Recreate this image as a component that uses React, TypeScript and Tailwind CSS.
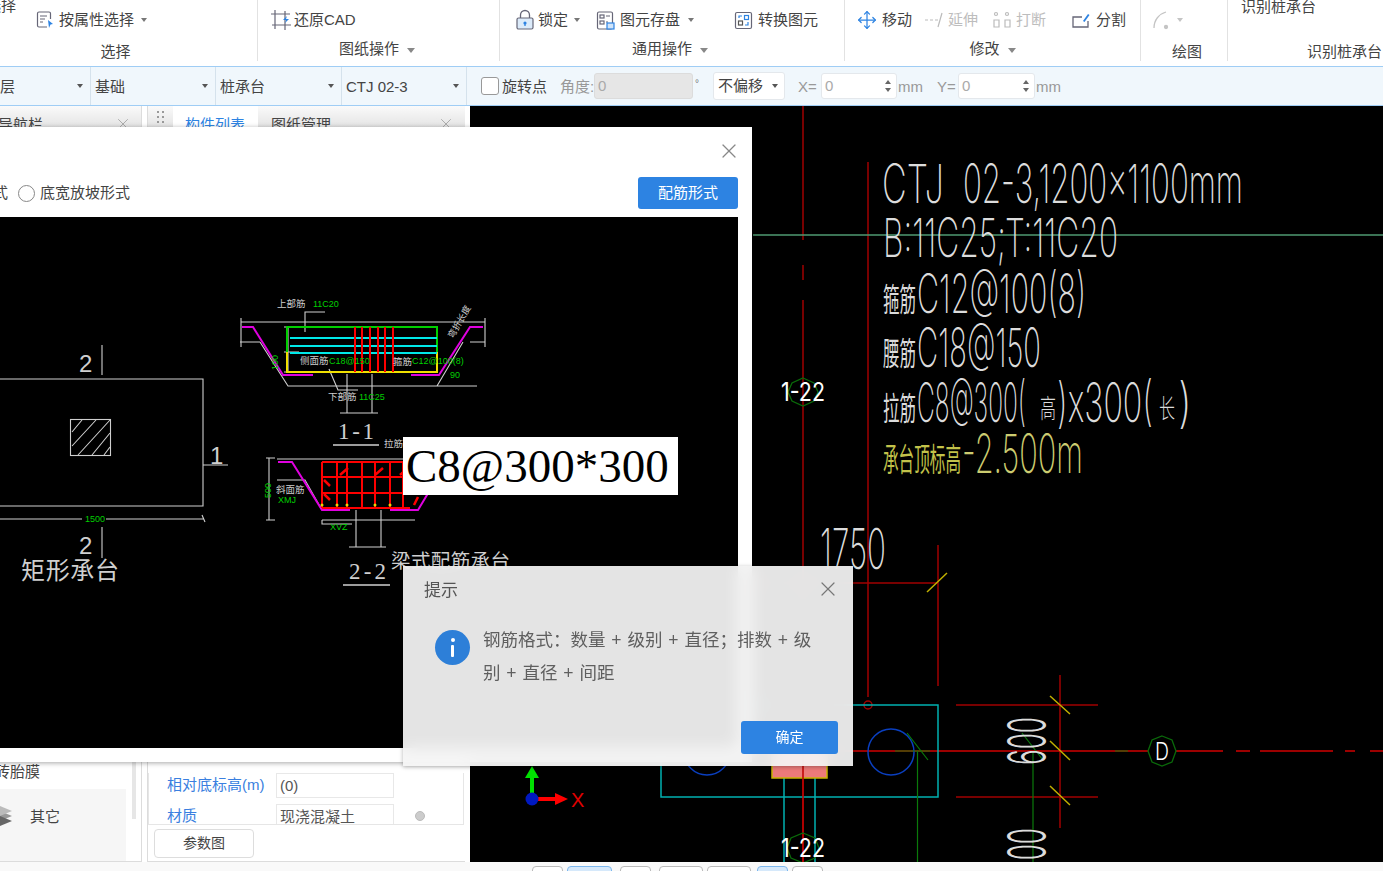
import React from "react";
import { Move, X } from "lucide-react";

const Caret = ({ c = "border-t-[#777]" }: { c?: string }) => (
  <span className={`inline-block w-0 h-0 border-x-[3px] border-x-transparent border-t-[4px] ${c}`} />
);

const DocIcon = () => (
  <svg width="20" height="20" viewBox="0 0 20 20" fill="none" stroke="#667" strokeWidth="1.2">
    <path d="M12 17H4a1.5 1.5 0 0 1-1.5-1.5v-12A1.5 1.5 0 0 1 4 2h10a1.5 1.5 0 0 1 1.500 1.500V9" />
    <path d="M5 6h7M5 9h5M5 12h3" />
    <path d="M13 10l5 4-2.500 .5L14 18z" fill="#2d83e2" stroke="none" />
  </svg>
);
const CadCropIcon = () => (
  <svg width="22" height="22" viewBox="0 0 22 22" fill="none" stroke="#667" strokeWidth="1.200">
    <path d="M5 1V20M1 5H20M15 2V21M2 16H21" />
    <path d="M13 11l4-4-1 3h3l-4 4 1-3z" fill="#2d83e2" stroke="none" />
  </svg>
);
const LockIcon = () => (
  <svg width="20" height="22" viewBox="0 0 20 22" fill="none">
    <path d="M5.500 9V6a4.500 4.500 0 0 1 9 0v3" stroke="#667" strokeWidth="1.300" />
    <rect x="2" y="9" width="16" height="11" rx="1.500" fill="#dcebfa" stroke="#667" strokeWidth="1.200" />
    <circle cx="10" cy="14" r="1.600" fill="#2d83e2" />
    <path d="M10 14v3" stroke="#2d83e2" strokeWidth="1.300" />
  </svg>
);
const SaveIcon = () => (
  <svg width="19" height="19" viewBox="0 0 19 19" fill="none" stroke="#667" strokeWidth="1.2">
    <rect x="1.500" y="1" width="15" height="17" rx="1.500" />
    <rect x="4" y="4" width="4" height="3" />
    <path d="M10 5h4M10 11h2" />
    <rect x="4" y="10" width="4" height="3" />
    <rect x="11" y="12" width="7" height="6" fill="#cfe4fa" stroke="#2d83e2" />
  </svg>
);
const ConvertIcon = () => (
  <svg width="19" height="19" viewBox="0 0 19 19" fill="none" stroke="#667" strokeWidth="1.2">
    <rect x="1.500" y="1.500" width="16" height="16" rx="1.500" />
    <rect x="4.500" y="10" width="4" height="4" stroke="#555" />
    <rect x="10.500" y="4.500" width="4" height="4" stroke="#2d83e2" />
    <path d="M5 7V5h3M14 11v3h-3" stroke="#2d83e2" />
  </svg>
);
const ExtendIcon = () => (
  <svg width="20" height="16" viewBox="0 0 20 16" fill="none" stroke="#bbb" strokeWidth="1.200">
    <path d="M1 8h3M6 8h3M11 8h3" />
    <path d="M18 1l-4 14" />
  </svg>
);
const BreakIcon = () => (
  <svg width="20" height="18" viewBox="0 0 20 18" fill="none" stroke="#bbb" strokeWidth="1.200">
    <circle cx="4" cy="3" r="1.500" />
    <circle cx="15" cy="3" r="1.500" />
    <path d="M2 16V9h5v7zM13 16V9h5v7z" />
  </svg>
);
const SplitIcon = () => (
  <svg width="20" height="18" viewBox="0 0 20 18" fill="none" stroke="#667" strokeWidth="1.300">
    <path d="M17 10v6H2V6h9" />
    <path d="M12 10l5-7 1.500 1-5 7z" fill="#2d83e2" stroke="none" />
  </svg>
);
const ArcIcon = () => (
  <svg width="22" height="22" viewBox="0 0 22 22" fill="none" stroke="#c4c4c4" strokeWidth="1.300">
    <path d="M3 19C3 11 8 5 15 3" />
    <circle cx="15" cy="18" r="1.500" fill="#c4c4c4" />
  </svg>
);

const Item = ({ icon, label, caret, muted, className = "" }: { icon: React.ReactNode; label: string; caret?: boolean; muted?: boolean; className?: string }) => (
  <div className={`flex items-center shrink-0 gap-[2px] ${className}`}>
    {icon}
    <span className={`text-[15px] leading-[22px] ${muted ? "text-[#bdbdbd]" : "text-[#444]"}`}>{label}</span>
    {caret && <span className="ml-[3px] flex items-center"><Caret /></span>}
  </div>
);

const GroupLabel = ({ children, caret, low, className = "" }: { children: string; caret?: boolean; low?: boolean; className?: string }) => (
  <div className={`flex justify-center items-center gap-[8px] text-[15px] leading-[20px] text-[#444] ${low ? "mt-[11px]" : "mt-[8px]"} ${className}`}>
    {children}
    {caret && <span className="w-0 h-0 border-x-[4px] border-x-transparent border-t-[5px] border-t-[#888] mt-[2px]" />}
  </div>
);

const Toolbar = () => (
  <div className="h-[66px] flex bg-white shrink-0 overflow-hidden">
    <div className="w-[258px] h-[61px] border-r border-[#e2e2e2] shrink-0">
      <div className="text-[15px] leading-[20px] text-[#444] h-[9px] -mt-[4px] ml-[-14px] w-[40px]">选择</div>
      <div className="flex pl-[35px] mt-[4px]">
        <Item icon={<DocIcon />} label="按属性选择" caret className="gap-[4px]" />
      </div>
      <div className="pr-[26px]"><GroupLabel low>选择</GroupLabel></div>
    </div>
    <div className="w-[242px] h-[61px] border-r border-[#e2e2e2] shrink-0 pt-[9px]">
      <div className="pl-[12px] flex">
        <Item icon={<CadCropIcon />} label="还原CAD" />
      </div>
      <GroupLabel caret className="pr-[3px]">图纸操作</GroupLabel>
    </div>
    <div className="w-[345px] h-[61px] border-r border-[#e2e2e2] shrink-0 pt-[9px]">
      <div className="flex pl-[15px]">
        <Item icon={<LockIcon />} label="锁定" caret className="w-[81px] gap-[3px]" />
        <Item icon={<SaveIcon />} label="图元存盘" caret className="w-[138px] gap-[5px]" />
        <Item icon={<ConvertIcon />} label="转换图元" className="gap-[5px]" />
      </div>
      <GroupLabel caret className="pr-[4px]">通用操作</GroupLabel>
    </div>
    <div className="w-[296px] h-[61px] border-r border-[#e2e2e2] shrink-0 pt-[9px]">
      <div className="flex pl-[12px]">
        <Item icon={<Move size={20} strokeWidth={1.500} className="text-[#2d83e2] mr-[3px]" />} label="移动" className="w-[67px]" />
        <Item icon={<ExtendIcon />} label="延伸" muted className="w-[68px] gap-[4px]" />
        <Item icon={<BreakIcon />} label="打断" muted className="w-[79px] gap-[4px]" />
        <Item icon={<SplitIcon />} label="分割" className="gap-[5px]" />
      </div>
      <GroupLabel caret>修改</GroupLabel>
    </div>
    <div className="w-[87px] h-[61px] border-r border-[#e2e2e2] shrink-0 pt-[9px]">
      <div className="flex items-center pl-[10px] gap-[4px]"><ArcIcon /><Caret c="border-t-[#c4c4c4]" /></div>
      <GroupLabel low className="pl-[6px]">绘图</GroupLabel>
    </div>
    <div className="flex-1 h-[61px] min-w-0">
      <div className="text-[15px] leading-[20px] text-[#444] -mt-[3px] pl-[13px] whitespace-nowrap">识别桩承台</div>
      <div className="text-[15px] leading-[20px] text-[#444] mt-[25px] pl-[79px] whitespace-nowrap">识别桩承台</div>
    </div>
  </div>
);

const OptCell = ({ label, w }: { label: string; w: string }) => (
  <div className={`${w} h-full shrink-0 border-r border-[#d5e2ec] flex items-center justify-between pl-[4px] pr-[7px] text-[15px] text-[#444]`}>
    <span className="pt-[2px]">{label}</span>
    <Caret c="border-t-[#555]" />
  </div>
);

const Spin = ({ w }: { w: string }) => (
  <div className={`${w} h-[26px] bg-white rounded-[3px] border border-[#e4e8ec] flex items-center justify-between pl-[3px] pr-[5px] text-[15px] text-[#aaa]`}>
    <span>0</span>
    <span className="flex flex-col gap-[4px]">
      <span className="w-0 h-0 border-x-[3px] border-x-transparent border-b-[4px] border-b-[#666]" />
      <span className="w-0 h-0 border-x-[3px] border-x-transparent border-t-[4px] border-t-[#666]" />
    </span>
  </div>
);

const OptionsBar = () => (
  <div className="h-[40px] shrink-0 bg-[#f0f7fc] border-y border-[#9fcdf5] flex items-center">
    <div className="w-[91px] h-full shrink-0 border-r border-[#d5e2ec] flex items-center justify-between pr-[7px] text-[15px] text-[#444]"><span className="pt-[2px]">层</span><Caret c="border-t-[#555]" /></div>
    <OptCell label="基础" w="w-[125px]" />
    <OptCell label="桩承台" w="w-[126px]" />
    <OptCell label="CTJ 02-3" w="w-[125px]" />
    <div className="w-[18px] h-[18px] ml-[14px] rounded-[3px] border border-[#999] bg-white shrink-0" />
    <span className="ml-[3px] pt-[2px] text-[15px] text-[#444] shrink-0">旋转点</span>
    <span className="ml-[13px] pt-[2px] text-[15px] text-[#999] shrink-0 w-[34px] whitespace-nowrap">角度:</span>
    <div className="w-[99px] h-[26px] rounded-[3px] bg-[#e6e6e6] border border-[#dcdcdc] text-[15px] text-[#aaa] pl-[3px] shrink-0 leading-[24px]">0</div>
    <span className="w-[20px] text-[10px] text-[#777] pl-[2px] -mt-[6px] shrink-0">°</span>
    <div className="w-[72px] h-[28px] rounded-[3px] bg-white border border-[#e4e8ec] flex items-center justify-between pl-[4px] pr-[6px] text-[15px] text-[#444] shrink-0"><span>不偏移</span><Caret c="border-t-[#555]" /></div>
    <span className="ml-[13px] pt-[2px] w-[23px] text-[15px] text-[#999] shrink-0">X=</span>
    <Spin w="w-[76px] shrink-0" />
    <span className="w-[40px] pt-[2px] text-[15px] text-[#999] pl-[1px] shrink-0">mm</span>
    <span className="w-[21px] pt-[2px] text-[15px] text-[#999] shrink-0">Y=</span>
    <Spin w="w-[77px] shrink-0" />
    <span className="pt-[2px] text-[15px] text-[#999] pl-[1px] shrink-0">mm</span>
  </div>
);

const LeftPanels = () => (
  <div className="w-[470px] shrink-0 flex bg-white">
    <div className="w-[142px] shrink-0 border-r border-b border-[#dcdcdc] flex flex-col">
      <div className="h-[21px] bg-[linear-gradient(#fafafa,#e4e4e4)] flex justify-between items-start pr-[9px] pt-[9px] text-[15px] leading-[20px] text-[#444] overflow-hidden">
        <span className="ml-[-2px] whitespace-nowrap">导航栏</span>
        <X size={18} strokeWidth={1.300} className="text-[#aaa] shrink-0" />
      </div>
      <div className="flex-1" />
      <div className="text-[15px] leading-[20px] text-[#444] ml-[-5px] whitespace-nowrap mb-[7px]">砖胎膜</div>
      <div className="flex">
        <div className="w-[126px] h-[72px] bg-[#f6f6f6] flex items-start pt-[16px] gap-[14px] overflow-hidden">
          <svg width="16" height="26" viewBox="0 0 16 26" className="shrink-0">
            <path d="M0 6l12 5-12 5z" fill="#999" />
            <path d="M0 11l12 5-12 5z" fill="#666" />
            <path d="M0 1l12 5-12 5z" fill="#bbb" />
          </svg>
          <span className="text-[15px] leading-[20px] text-[#444] mt-[2px]">其它</span>
        </div>
        <div className="w-[4px] h-[60px] bg-[#e6e6e6] ml-[6px] -mt-[30px]" />
      </div>
    </div>
    <div className="w-[5px] shrink-0" />
    <div className="w-[318px] shrink-0 border-l border-b border-[#dcdcdc] flex flex-col">
      <div className="h-[21px] bg-[linear-gradient(#fafafa,#e4e4e4)] flex items-start text-[15px] leading-[20px] overflow-hidden">
        <span className="w-[25px] flex justify-center pt-[5px]">
          <svg width="7" height="12" viewBox="0 0 7 12" fill="#999"><path d="M0 0h2v2H0zM5 0h2v2H5zM0 5h2v2H0zM5 5h2v2H5zM0 10h2v2H0zM5 10h2v2H5z" /></svg>
        </span>
        <span className="w-[85px] h-full bg-white text-[#2d83e2] pt-[9px] pl-[12px]">构件列表</span>
        <span className="pt-[9px] pl-[13px] text-[#444]">图纸管理</span>
        <X size={18} strokeWidth={1.300} className="text-[#aaa] mt-[9px] ml-auto mr-[10px] shrink-0" />
      </div>
      <div className="flex-1" />
      <div className="mr-[1px] border-x border-b border-[#e6e6e6] flex flex-col gap-[6px] pl-[18px]">
        <div className="flex items-center h-[25px]">
          <span className="w-[108px] text-[15px] text-[#3a7fe0] whitespace-nowrap">相对底标高(m)</span>
          <span className="ml-[1px] w-[118px] h-[25px] border border-[#e8e8e8] text-[15px] text-[#555] pl-[3px] leading-[23px]">(0)</span>
        </div>
        <div className="flex items-center h-[20px] overflow-hidden">
          <span className="w-[108px] text-[15px] leading-[20px] text-[#3a7fe0] pt-[4px]">材质</span>
          <span className="ml-[1px] w-[118px] h-[20px] border-x border-t border-[#e8e8e8] text-[15px] text-[#555] pl-[3px] leading-[23px]">现浇混凝土</span>
          <span className="ml-[21px] w-[10px] h-[10px] rounded-full bg-[#ccc] border border-[#bbb] mt-[4px]" />
        </div>
      </div>
      <div className="h-[36px] pl-[6px] pt-[4px]">
        <div className="w-[100px] h-[29px] rounded-[4px] border border-[#ddd] bg-white text-[14px] text-[#444] text-center leading-[27px]">参数图</div>
      </div>
    </div>
  </div>
);

const CadCanvas = () => (
  <div className="flex-1 bg-black min-w-0">
    <svg viewBox="470 106 913 756" width="913" height="756" className="block" fill="none">
      <g stroke="#a00000" strokeWidth="1.500">
        <path d="M803 106V240M803 265V280M803 300V862" />
        <path d="M868 162V697M938 545V686M753 583H938" />
        <path d="M956 705H1098M956 797H1098M1060 675V828" />
        <path d="M753 751H1223" stroke="#d00000" />
        <path d="M1236 751H1250M1260 751H1333M1345 751H1355M1370 751H1383" stroke="#d00000" />
      </g>
      <circle cx="868" cy="705" r="4" stroke="#a00000" strokeWidth="1.500" />
      <path d="M753 235H1383" stroke="#4f9a72" strokeWidth="1.500" />
      <g stroke="#00b0b0" strokeWidth="1.500">
        <path d="M661 705H938V797H661V705" />
        <path d="M784 778V862M815 778V862" />
      </g>
      <rect x="772" y="745" width="55" height="33" fill="#ec7a7a" stroke="#c8b400" strokeWidth="1.500" />
      <path d="M803 745V862" stroke="#c00000" strokeWidth="1.500" />
      <circle cx="891" cy="752" r="23" stroke="#0a3fc0" strokeWidth="1.500" />
      <circle cx="707" cy="752" r="23" stroke="#0a3fc0" strokeWidth="1.500" />
      <g stroke="#0a7a0a" strokeWidth="1.200">
        <path d="M917.500 751V862M1033 751V862" />
        <path d="M907 733L928 760M1022 733L1043 760" />
        <path d="M895 751H930M1115 751H1128" />
      </g>
      <g stroke="#c0b000" strokeWidth="1.500">
        <path d="M927 592L947 573M1050 696L1070 714M1050 741L1070 760M1050 786L1070 805" />
      </g>
      <g stroke="#0a6a0a" strokeWidth="1.300">
        <path d="M803 378l11 5 4 9-4 9-11 5-11-5-4-9 4-9z" />
        <path d="M803 833l12 5 4 10-4 10-12 5-12-5-4-10 4-10z" />
        <path d="M1162 736l10 4 4 11-4 11-10 4-10-4-4-11 4-11z" fill="#000" />
      </g>
      <g fontFamily="Inter,'Liberation Sans',sans-serif" fill="#dcdcdc" fontWeight="200">
        <text x="882" y="203" fontSize="54" textLength="62" lengthAdjust="spacingAndGlyphs">CTJ</text>
        <text x="963" y="203" fontSize="54" textLength="280" lengthAdjust="spacingAndGlyphs">02-3,1200x1100mm</text>
        <text x="883" y="257" fontSize="54" textLength="235" lengthAdjust="spacingAndGlyphs">B:11C25;T:11C20</text>
        <text x="917" y="313" fontSize="54" textLength="169" lengthAdjust="spacingAndGlyphs">C12@100(8)</text>
        <text x="917" y="367" fontSize="54" textLength="124" lengthAdjust="spacingAndGlyphs">C18@150</text>
        <text x="917" y="422" fontSize="54" textLength="109" lengthAdjust="spacingAndGlyphs">C8@300(</text>
        <text x="1040" y="418" fontSize="26" fontWeight="300" fontFamily="'Noto Sans CJK SC',sans-serif" textLength="16" lengthAdjust="spacingAndGlyphs">高</text>
        <text x="1057" y="422" fontSize="54" textLength="96" lengthAdjust="spacingAndGlyphs">)x300(</text>
        <text x="1159" y="418" fontSize="26" fontWeight="300" fontFamily="'Noto Sans CJK SC',sans-serif" textLength="16" lengthAdjust="spacingAndGlyphs">长</text>
        <text x="1178" y="422" fontSize="54" textLength="14" lengthAdjust="spacingAndGlyphs">)</text>
        <g fontFamily="'Noto Sans CJK SC',sans-serif" fontSize="32" fontWeight="400">
          <text x="883" y="311" textLength="33" lengthAdjust="spacingAndGlyphs">箍筋</text>
          <text x="883" y="365" textLength="33" lengthAdjust="spacingAndGlyphs">腰筋</text>
          <text x="883" y="420" textLength="33" lengthAdjust="spacingAndGlyphs">拉筋</text>
          <text x="883" y="471" textLength="78" lengthAdjust="spacingAndGlyphs" fill="#c2c24a">承台顶标高</text>
        </g>
        <text x="962" y="473" fontSize="54" fill="#cccc70" textLength="121" lengthAdjust="spacingAndGlyphs">-2.500m</text>
        <text x="820" y="569" fontSize="56" textLength="66" lengthAdjust="spacingAndGlyphs">1750</text>
        <text x="781" y="401" fontSize="26" fontWeight="400" fill="#fff" textLength="44" lengthAdjust="spacingAndGlyphs">1-22</text>
        <text x="781" y="857" fontSize="26" fontWeight="400" fill="#fff" textLength="44" lengthAdjust="spacingAndGlyphs">1-22</text>
        <text x="1155" y="760" fontSize="24" fontWeight="300" fill="#fff" textLength="14" lengthAdjust="spacingAndGlyphs">D</text>
        <text transform="translate(1046 765) rotate(-90)" fontSize="54" fontWeight="300" textLength="48" lengthAdjust="spacingAndGlyphs">600</text>
        <text transform="translate(1046 876) rotate(-90)" fontSize="54" fontWeight="300" textLength="48" lengthAdjust="spacingAndGlyphs">600</text>
      </g>
      <path d="M532 799V775" stroke="#00e000" strokeWidth="4" />
      <path d="M532 766l7 12h-14z" fill="#00e000" />
      <path d="M532 799H556" stroke="#ff0000" strokeWidth="4" />
      <path d="M568 799l-13-6v12z" fill="#ff0000" />
      <circle cx="532" cy="799" r="6.500" fill="#0018c0" />
      <text x="571" y="807" fill="#e00000" fontSize="20" fontFamily="'Liberation Sans',sans-serif">X</text>
    </svg>
  </div>
);

const Drawing = () => (
  <svg viewBox="0 217 738 531" width="738" height="531" className="block shrink-0" fill="none">
    <rect x="0" y="217" width="738" height="531" fill="#000" />
    <g stroke="#cfcfcf" strokeWidth="1.100">
      <path d="M0 379H203V506H0" />
      <rect x="70.500" y="419.500" width="40" height="36" />
      <path d="M72 432l10-12M72 446l24-26M78 455l32-35M92 455l18-22M104 455l6-8" />
      <path d="M102 345V375M102 527V558M203 465H228M0 519H82M106 519H204M202 515l3 7" />
      <path d="M241 322H485M241 318V347M485 318V347" />
      <path d="M260 342L288 386H477M240 342H260M470 342H485M463 342L437 386" />
      <path d="M284 327H299M284 352H299M284 372H299M288 327V372" />
      <path d="M347 374V413M372 374V413M340 413H378" />
      <path d="M305 332V312H325M329 369L338 390H358" />
      <path d="M333 445H379M343 585H390" strokeWidth="1.300" />
      <path d="M277 459H430M269 458V520M266 458H275M266 520H275M277 480H305L322 510M322 520H415" />
      <path d="M356 510V547M381 510V547M349 547H386" />
      <path d="M322 520V524H352" />
    </g>
    <path d="M242 327H253L283 375H313M483 327H470L439 375H411" stroke="#e000e0" strokeWidth="2" />
    <path d="M278 462H292L322 510H350M390 510H418L436 480" stroke="#e000e0" strokeWidth="2" />
    <path d="M287 352V327H437V352" stroke="#00d000" strokeWidth="2" />
    <path d="M287 352V372H437V352" stroke="#f0e000" strokeWidth="2" />
    <path d="M290 338H437M290 346H437M290 353H437" stroke="#00e8e8" strokeWidth="2" />
    <path d="M355 327V372M362 327V372M370 327V372M378 327V372M385 327V372M393 327V372" stroke="#ff0000" strokeWidth="2" />
    <path d="M322 462V508M337 462V508M347 462V508M362 462V508M375 462V508M390 462V508M403 462V508M322 462H410M322 477H410M322 493H410M322 508H410" stroke="#ff0000" strokeWidth="2" />
    <path d="M340 475l8-7M375 475l8-7M400 475l8-7M324 480l6 6M324 494l6 6M414 505l4-8" stroke="#ff0000" strokeWidth="2.500" />
    <g fill="#e8d800">
      <circle cx="322" cy="505" r="1.500" /><circle cx="337" cy="505" r="1.500" /><circle cx="347" cy="505" r="1.500" /><circle cx="375" cy="505" r="1.500" /><circle cx="390" cy="505" r="1.500" />
    </g>
    <g fill="#cfcfcf" fontFamily="'Liberation Sans',sans-serif">
      <text x="79" y="372" fontSize="24">2</text>
      <text x="79" y="554" fontSize="24">2</text>
      <text x="210" y="464" fontSize="24">1</text>
      <text x="338" y="439" fontSize="23" fontFamily="'Liberation Serif',serif" textLength="36" lengthAdjust="spacing">1-1</text>
      <text x="349" y="579" fontSize="23" fontFamily="'Liberation Serif',serif" textLength="37" lengthAdjust="spacing">2-2</text>
    </g>
    <g fill="#cfcfcf" fontFamily="'Noto Sans CJK SC',sans-serif">
      <text x="21" y="579" fontSize="24" textLength="98">矩形承台</text>
      <text x="391" y="568" fontSize="19.500" textLength="119">梁式配筋承台</text>
      <text x="277" y="307" fontSize="9.500">上部筋</text>
      <text x="300" y="364" fontSize="9.500">侧面筋</text>
      <text x="393" y="365" fontSize="9.500">箍筋</text>
      <text x="328" y="400" fontSize="9.500">下部筋</text>
      <text x="384" y="447" fontSize="9.500">拉筋</text>
      <text x="276" y="493" fontSize="9.500">斜面筋</text>
      <text transform="translate(453 339) rotate(-60)" fontSize="9">弯折长度</text>
    </g>
    <g fill="#00d000" fontFamily="'Liberation Sans',sans-serif" fontSize="9">
      <text x="313" y="307">11C20</text>
      <text x="329" y="364">C18@150</text>
      <text x="412" y="364">C12@100(8)</text>
      <text x="359" y="400">11C25</text>
      <text x="85" y="522">1500</text>
      <text x="330" y="530">XVZ</text>
      <text x="278" y="503">XMJ</text>
      <text x="450" y="378">90</text>
      <text transform="translate(271 498) rotate(-90)">500</text>
      <text transform="translate(278 370) rotate(-90)">100</text>
    </g>
  </svg>
);

export default function App() {
  return (
    <div className="relative w-[1383px] h-[871px] overflow-hidden bg-[#f9f9f9] flex flex-col font-['Liberation_Sans','Noto_Sans_CJK_SC',sans-serif]">
      <Toolbar />
      <OptionsBar />
      <div className="h-[756px] flex shrink-0">
        <LeftPanels />
        <CadCanvas />
      </div>
      <div className="h-[9px] flex items-start pl-[532px] gap-[4px]">
        <span className="w-[31px] h-[9px] mt-[4px] rounded-t-[4px] border border-[#bbb] bg-white" />
        <span className="w-[45px] h-[9px] mt-[4px] rounded-t-[4px] border border-[#7db8ee] bg-[#d6e9fb]" />
        <span className="w-[31px] h-[9px] mt-[4px] ml-[4px] rounded-t-[4px] border border-[#bbb] bg-white" />
        <span className="w-[44px] h-[9px] mt-[4px] ml-[4px] rounded-t-[4px] border border-[#bbb] bg-white" />
        <span className="w-[44px] h-[9px] mt-[4px] rounded-t-[4px] border border-[#bbb] bg-white" />
        <span className="w-[31px] h-[9px] mt-[4px] ml-[2px] rounded-t-[4px] border border-[#7db8ee] bg-[#d6e9fb]" />
        <span className="w-[31px] h-[9px] mt-[4px] rounded-t-[4px] border border-[#bbb] bg-white" />
      </div>

      {/* parameter dialog, runs off the left of the window */}
      <div className="absolute left-[-20px] top-[127px] w-[772px] h-[635px] bg-white shadow-[0_1px_5px_rgba(0,0,0,0.35)] flex flex-col">
        <div className="h-[46px] flex items-start justify-end pr-[11px] pt-[12px]">
          <X size={24} strokeWidth={1.200} className="text-[#888]" />
        </div>
        <div className="h-[44px] flex items-start pt-[4px] pl-[13px]">
          <span className="text-[15px] leading-[32px] text-[#444]">式</span>
          <span className="ml-[10px] mt-[8px] w-[17px] h-[17px] rounded-full border border-[#888] bg-white" />
          <span className="ml-[5px] text-[15px] leading-[32px] text-[#444]">底宽放坡形式</span>
          <div className="ml-auto mr-[14px] w-[100px] h-[32px] rounded-[3px] bg-[#2d83e2] text-white text-[15px] text-center leading-[32px]">配筋形式</div>
        </div>
        <div className="relative ml-[20px] w-[738px] h-[531px]">
          <Drawing />
          <div className="absolute left-[403px] top-[220px] w-[275px] h-[58px] bg-white text-black text-[47px] leading-[58px] pl-[3px] font-['Liberation_Serif',serif] whitespace-nowrap">C8@300*300</div>
        </div>
      </div>

      {/* hint dialog */}
      <div className="absolute left-[403px] top-[566px] w-[450px] h-[200px] bg-[#f5f5f5]/[.93] backdrop-blur-[8px] shadow-[0_1px_4px_rgba(0,0,0,0.3)] flex flex-col">
        <div className="h-[50px] flex items-center justify-between pl-[21px] pr-[13px]">
          <span className="text-[17px] text-[#555]">提示</span>
          <X size={24} strokeWidth={1.200} className="text-[#777] -mt-[4px]" />
        </div>
        <div className="flex pl-[32px] pt-[14px]">
          <div className="w-[35px] h-[35px] rounded-full bg-[#2d7fd8] flex flex-col items-center justify-center gap-[3px] shrink-0">
            <span className="w-[4px] h-[4px] rounded-full bg-white" />
            <span className="w-[3px] h-[12px] bg-white rounded-[1px]" />
          </div>
          <p className="ml-[13px] w-[340px] text-[17.500px] leading-[33px] [word-spacing:1px] text-[#5f5f5f] -mt-[6px]">钢筋格式：数量 + 级别 + 直径；排数 + 级别 + 直径 + 间距</p>
        </div>
        <div className="mt-auto mb-[12px] mr-[15px] ml-auto w-[97px] h-[33px] rounded-[3px] bg-[#2d83e2] text-white text-[14px] text-center leading-[33px]">确定</div>
      </div>
    </div>
  );
}
